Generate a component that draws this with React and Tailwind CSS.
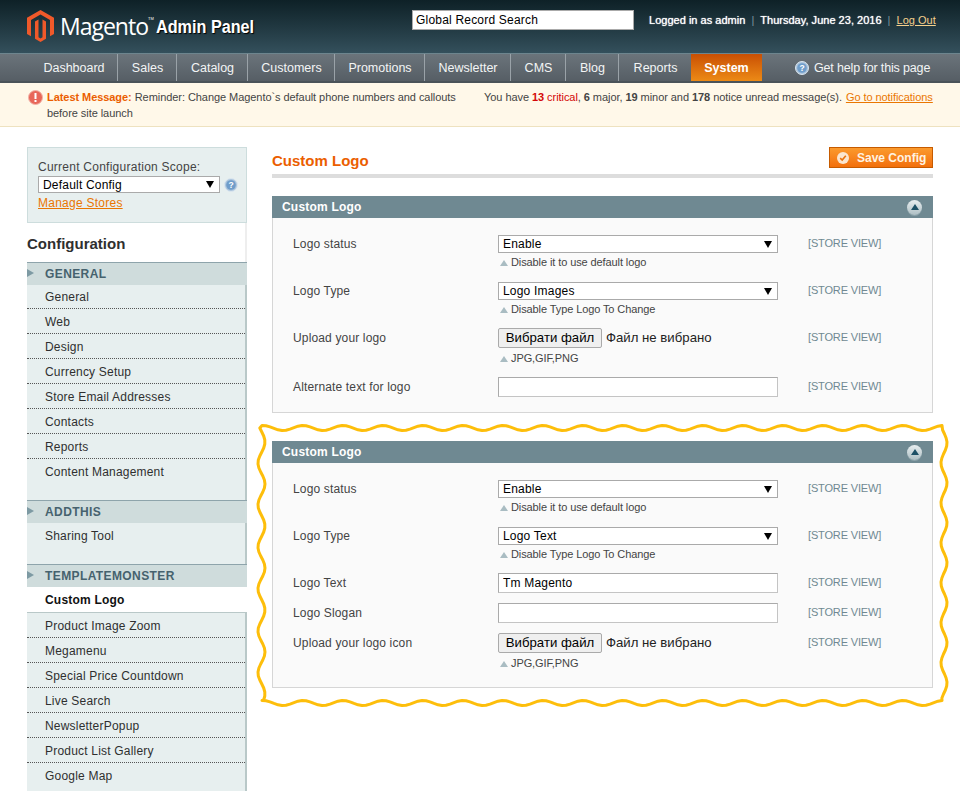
const font = { fontFamily: '"Liberation Sans", Arial, sans-serif' };

const navItems = [
  ['Dashboard', 'w-[88px]'],
  ['Sales', 'w-[59px]'],
  ['Catalog', 'w-[71px]'],
  ['Customers', 'w-[87px]'],
  ['Promotions', 'w-[90px]'],
  ['Newsletter', 'w-[86px]'],
  ['CMS', 'w-[55px]'],
  ['Blog', 'w-[53px]'],
  ['Reports', 'w-[72px]'],
];

function wavePath() {
  const pts = [];
  for (let x = 262; x <= 944; x += 4) pts.push([x, 428 - 2.5 * Math.sin((2 * Math.PI * (x - 293)) / 40)]);
  for (let y = 430; y <= 700; y += 4) pts.push([944 + 3 * Math.cos((2 * Math.PI * (y - 643)) / 40), y]);
  for (let x = 942; x >= 262; x -= 4) pts.push([x, 703 - 2.5 * Math.cos((2 * Math.PI * (x - 743)) / 40)]);
  for (let y = 700; y >= 428; y -= 4) pts.push([261.5 + 3.5 * Math.cos((2 * Math.PI * (y - 442)) / 42), y]);
  return 'M' + pts.map(p => p[0].toFixed(1) + ' ' + p[1].toFixed(1)).join('L') + 'Z';
}

function MagentoMark() {
  return (
    <svg width="27" height="32" viewBox="0 0 27 32" className="shrink-0">
      <path d="M13.5 0 27 7.8v16.2l-4 2.3V9.9L13.5 4.4 4 9.9v16.4L0 24V7.8z" fill="#f0592a" />
      <path d="M11.5 9.6v17.6l2 1.2 2-1.2V9.6l3.5 2v17.1L13.5 32 8 28.7V11.6z" fill="#f0592a" />
    </svg>
  );
}

function HelpIcon({ size = 14 }) {
  return (
    <svg width={size} height={size} viewBox="0 0 14 14" className="shrink-0">
      <circle cx="7" cy="7" r="6.5" fill="#a9c3dc" stroke="#dbe6ef" />
      <circle cx="7" cy="7" r="4.8" fill="#6f9dca" />
      <text x="7" y="10" textAnchor="middle" fontSize="8.5" fontWeight="700" fill="#fff" style={font}>?</text>
    </svg>
  );
}

function Arrow() {
  return <span className="h-0 w-0 border-x-[4px] border-t-[7px] border-x-transparent border-t-black" />;
}

function SideHead({ children }) {
  return (
    <div className="relative h-[23px] border-t border-[#8ea4ab] bg-[#cfdcdc] pl-[18px] text-[12px] leading-[22px] font-bold tracking-[0.4px] text-[#46626e]">
      <span className="absolute left-0 top-[6px] h-0 w-0 border-y-[4.5px] border-l-[7px] border-y-transparent border-l-[#7d9aa3]" />
      {children}
    </div>
  );
}

function SideList({ items, pad }) {
  return (
    <div className={`border-r-2 border-[#b9c8c8] bg-[#e7efef] ${pad}`}>
      {items.map((t, i) => (
        <div key={t} className={`h-[25px] pl-[18px] text-[12px] leading-[26px] tracking-[0.2px] text-[#2f2f2f] ${i < items.length - 1 ? 'border-b border-dotted border-[#555]' : ''}`}>
          {t}
        </div>
      ))}
    </div>
  );
}

function Sidebar() {
  return (
    <div className="w-[220px] shrink-0">
      <div className="h-[76px] border border-[#cddddd] bg-[#e7efef] pl-[10px] pt-[12px] text-[12px]">
        <div className="leading-[15px] tracking-[0.25px] text-[#444]">Current Configuration Scope:</div>
        <div className="mt-[1px] flex items-center gap-[4px]">
          <div className="flex h-[17px] w-[182px] items-center justify-between border border-[#aaa] bg-white pl-[4px] pr-[5px] text-[12px] tracking-[0.2px] text-black">
            <span>Default Config</span>
            <Arrow />
          </div>
          <HelpIcon />
        </div>
        <a className="mt-[3px] block leading-[15px] tracking-[0.25px] text-[#ea7601] underline">Manage Stores</a>
      </div>
      <div className="h-[39px] bg-white text-[15px] leading-[42px] font-bold text-[#2f2f2f] shadow-[inset_-2px_0_0_#eee]">Configuration</div>
      <SideHead>GENERAL</SideHead>
      <SideList items={['General', 'Web', 'Design', 'Currency Setup', 'Store Email Addresses', 'Contacts', 'Reports', 'Content Management']} pad="-mt-px pb-[16px]" />
      <SideHead>ADDTHIS</SideHead>
      <SideList items={['Sharing Tool']} pad="pb-[16px]" />
      <SideHead>TEMPLATEMONSTER</SideHead>
      <div className="h-[25px] pl-[18px] text-[12px] leading-[27px] font-bold tracking-[0.2px] text-[#111]">Custom Logo</div>
      <div className="border-t border-[#b9c8c8]">
        <SideList items={['Product Image Zoom', 'Megamenu', 'Special Price Countdown', 'Live Search', 'NewsletterPopup', 'Product List Gallery', 'Google Map']} pad="pb-[30px]" />
      </div>
    </div>
  );
}

function Row({ label, children, hint, tall, className }) {
  return (
    <div className={`flex items-start ${className}`}>
      <div className={`w-[225px] pl-[20px] text-[12px] tracking-[0.15px] text-[#444] ${tall ? 'leading-[20px]' : 'leading-[18px]'}`}>{label}</div>
      <div className="w-[310px]">
        {children}
        {hint && (
          <div className={`flex h-[17px] items-center gap-[3px] pl-[2px] text-[11px] tracking-[-0.1px] text-[#444] ${tall ? 'mt-[2px]' : 'mt-[1px]'}`}>
            <span className="h-0 w-0 border-x-[4px] border-b-[6px] border-x-transparent border-b-[#a9bcc2]" />
            {hint}
          </div>
        )}
      </div>
      <div className={`text-[11px] tracking-[-0.15px] text-[#6f8992] ${tall ? 'leading-[18px]' : 'leading-[16px]'}`}>[STORE VIEW]</div>
    </div>
  );
}

function SelectBox({ value }) {
  return (
    <div className="flex h-[18px] w-[280px] items-center justify-between border border-[#aaa] bg-white pl-[4px] pr-[5px] text-[12px] tracking-[0.2px] text-black">
      <span>{value}</span>
      <Arrow />
    </div>
  );
}

function TextBox({ value }) {
  return <input readOnly value={value} className="block h-[20px] w-[280px] border border-[#aaa] border-b-[#c4c4c4] border-r-[#c4c4c4] bg-white px-[4px] text-[12px] tracking-[0.2px] text-black" style={font} />;
}

function FilePick() {
  return (
    <div className="flex items-center text-[13.2px] text-[#222]">
      <button className="h-[20px] w-[104px] rounded-[2px] border border-[#aaa] bg-[#efefef] text-[13.2px] leading-[18px] text-black">Вибрати файл</button>
      <span className="ml-[4px]">Файл не вибрано</span>
    </div>
  );
}

function Panel({ title, children, className }) {
  return (
    <div className={className}>
      <div className="flex h-[22px] items-center justify-between bg-[#6f8992] pl-[10px] pr-[11px] text-[12px] font-bold tracking-[0.2px] text-white">
        {title}
        <span className="flex h-[15px] w-[15px] items-center justify-center rounded-full bg-gradient-to-b from-[#e8eef0] to-[#aebfc4] shadow-[0_1px_0_#8ca3aa]">
          <span className="h-0 w-0 border-x-[4px] border-b-[6px] border-x-transparent border-b-[#1d5066]" />
        </span>
      </div>
      <div className="border border-t-0 border-[#d6d6d6] bg-[#fafafa]">{children}</div>
    </div>
  );
}

export default function App() {
  return (
    <div className="relative h-[791px] w-[960px] overflow-hidden bg-white" style={font}>
      {/* header */}
      <div className="flex h-[53px] items-start bg-gradient-to-b from-[#0e2127] to-[#34505c] pl-[27px]">
        <div className="mt-[10px]"><MagentoMark /></div>
        <div className="ml-[6px] mt-[10px] text-[23px] leading-[32px] tracking-[-1px] text-white" style={{ fontFamily: '"Open Sans", sans-serif' }}>Magento</div>
        <sup className="mt-[19px] text-[4px] leading-none text-white">TM</sup>
        <div className="ml-[2px] mt-[16px] origin-left scale-x-[0.9] text-[18px] leading-[22px] font-bold whitespace-nowrap text-white [text-shadow:1px_1px_1px_#000]">Admin Panel</div>
      </div>
      <div className="absolute left-[412px] top-[10px] h-[20px] w-[222px] border border-[#aaa] bg-white pl-[3px] text-[12px] leading-[18px] tracking-[0.2px] text-black">Global Record Search</div>
      <div className="absolute left-[649px] top-[13px] flex text-[11px] leading-[14px] tracking-[0.02px] whitespace-nowrap text-white [text-shadow:0_0_1px_#fff]">
        Logged in as admin
        <span className="mx-[6px] text-[#7f949c] [text-shadow:none]">|</span>
        Thursday, June 23, 2016
        <span className="mx-[6px] text-[#7f949c] [text-shadow:none]">|</span>
        <a className="text-[#f5d08c] underline [text-shadow:none]">Log Out</a>
      </div>

      {/* nav */}
      <div className="flex h-[30px] items-stretch border-t border-[#6d858e] border-b-2 border-b-[#4a5359] bg-gradient-to-b from-[#6b747b] to-[#565e65] pl-[30px] text-[12.5px] text-[#f3f5f5]" style={{ lineHeight: '28px' }}>
        {navItems.map(([n, w], i) => (
          <div key={n} className={`${w} pl-px text-center ${i < navItems.length - 1 ? 'border-r border-[#9aa2a8]' : ''}`}>{n}</div>
        ))}
        <div className="w-[71px] bg-gradient-to-b from-[#c94f04] to-[#ec8a16] text-center font-bold text-white">System</div>
        <div className="ml-[33px] flex items-center gap-[5px] tracking-[-0.15px] whitespace-nowrap">
          <HelpIcon />
          Get help for this page
        </div>
      </div>

      {/* message bar */}
      <div className="flex h-[44px] border-b border-[#eee2c0] bg-[#fff8e9] pl-[28px] pt-[6px] text-[11px] leading-[16px] tracking-[-0.06px] text-[#444]">
        <svg width="15" height="15" viewBox="0 0 15 15" className="mt-[1px] shrink-0">
          <circle cx="7.5" cy="7.5" r="7" fill="#e8675a" stroke="#f2b3a8" />
          <rect x="6.5" y="3" width="2" height="6" fill="#fff" />
          <rect x="6.5" y="10" width="2" height="2" fill="#fff" />
        </svg>
        <div className="ml-[4px] w-[437px]">
          <b className="text-[#eb5e00]">Latest Message:</b> Reminder: Change Magento`s default phone numbers and callouts before site launch
        </div>
        <div className="whitespace-nowrap">
          You have <b className="font-normal text-[#d40707]"><b>13</b> critical</b>, <b>6</b> major, <b>19</b> minor and <b>178</b> notice unread message(s). <a className="ml-[1px] text-[#ea7601] underline">Go to notifications</a>
        </div>
      </div>

      {/* body */}
      <div className="flex pl-[27px] pt-[20px]">
        <Sidebar />
        <div className="ml-[25px] w-[661px]">
          <div className="flex h-[31px] items-start justify-between border-b-4 border-[#ddd]">
            <div className="mt-[4px] text-[15px] leading-[20px] font-bold text-[#eb5e00]">Custom Logo</div>
            <button className="flex h-[21px] w-[104px] items-center border border-[#c65b00] bg-gradient-to-b from-[#fb9a2c] to-[#f26f0a] pl-[7px] text-[12px] font-bold text-[#fff3e2]">
              <span className="flex h-[12px] w-[12px] items-center justify-center rounded-full bg-[#fbe6cf]">
                <svg width="8" height="8" viewBox="0 0 8 8"><path d="M1.2 4.2 3.2 6 6.8 1.8" fill="none" stroke="#e9720c" strokeWidth="1.6" /></svg>
              </span>
              <span className="ml-[8px]">Save Config</span>
            </button>
          </div>

          <Panel title="Custom Logo" className="mt-[18px]">
            <div className="h-[194px] pt-[17px]">
              <Row label="Logo status" hint="Disable it to use default logo" className="h-[47px]"><SelectBox value="Enable" /></Row>
              <Row label="Logo Type" hint="Disable Type Logo To Change" className="h-[46px]"><SelectBox value="Logo Images" /></Row>
              <Row label="Upload your logo" hint="JPG,GIF,PNG" tall className="h-[49px]"><FilePick /></Row>
              <Row label="Alternate text for logo" tall className="h-[20px]"><TextBox value="" /></Row>
            </div>
          </Panel>

          <Panel title="Custom Logo" className="mt-[28px]">
            <div className="h-[224px] pt-[17px]">
              <Row label="Logo status" hint="Disable it to use default logo" className="h-[47px]"><SelectBox value="Enable" /></Row>
              <Row label="Logo Type" hint="Disable Type Logo To Change" className="h-[46px]"><SelectBox value="Logo Text" /></Row>
              <Row label="Logo Text" tall className="h-[30px]"><TextBox value="Tm Magento" /></Row>
              <Row label="Logo Slogan" tall className="h-[30px]"><TextBox value="" /></Row>
              <Row label="Upload your logo icon" hint="JPG,GIF,PNG" tall className="h-[48px]"><FilePick /></Row>
            </div>
          </Panel>
        </div>
      </div>

      {/* hand-drawn highlight round the second panel */}
      <svg className="pointer-events-none absolute left-0 top-0" width="960" height="791">
        <path d={wavePath()} fill="none" stroke="#fdbe0b" strokeWidth="3" strokeLinejoin="round" />
      </svg>
    </div>
  );
}
